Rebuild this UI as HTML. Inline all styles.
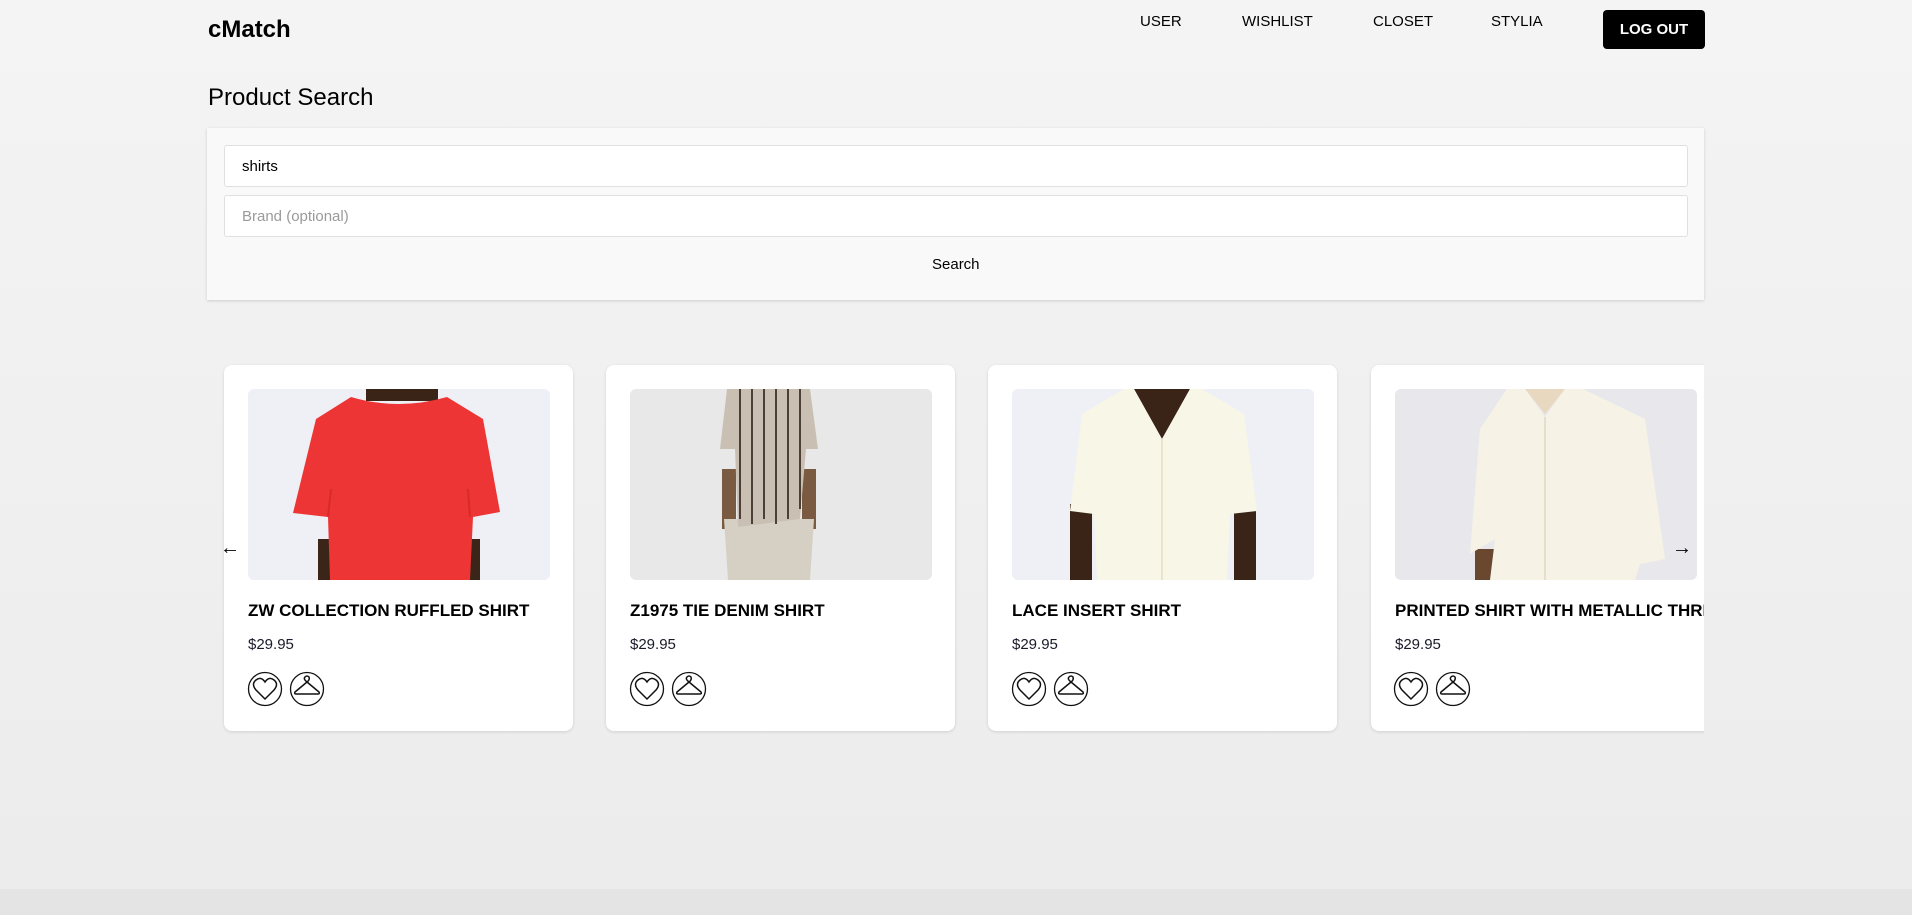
<!DOCTYPE html>
<html><head><meta charset="utf-8"><style>
*{box-sizing:border-box;margin:0;padding:0}
body{width:1912px;height:915px;overflow:hidden;font-family:"Liberation Sans",sans-serif;background:linear-gradient(#f4f4f4,#ececec 880px);position:relative;color:#000}
.abs{position:absolute}
.logo{left:208px;top:16px;font-size:24px;font-weight:bold}
.nav{top:13px;font-size:15px}
.btn{left:1603px;top:10px;width:102px;height:39px;background:#000;color:#fff;border-radius:4px;font-weight:bold;font-size:15px;display:flex;align-items:center;justify-content:center}
.h1{left:208px;top:84px;font-size:24px}
.panel{left:207px;top:128px;width:1497px;height:172px;background:#f9f9f9;box-shadow:0 1px 3px rgba(0,0,0,.15)}
.inp{left:224px;width:1464px;height:42px;background:#fff;border:1px solid #e0e0e0;border-radius:3px;font-size:15px;padding:12px 17px}
.search{left:932px;top:256px;font-size:15px}
.card{top:365px;width:349px;height:366px;background:#fff;border-radius:8px;box-shadow:0 1px 3px rgba(0,0,0,.12);overflow:hidden}
.img{position:absolute;left:24px;top:24px;width:302px;height:191px;border-radius:6px;overflow:hidden}
.card .t{position:absolute;left:24px;top:236px;font-size:17px;font-weight:bold;white-space:nowrap}
.card .p{position:absolute;left:24px;top:271px;font-size:15px;color:#1a1a2a}
.clip{left:207px;top:360px;width:1497px;height:380px;overflow:hidden}
.bottom{left:0;top:889px;width:1912px;height:26px;background:#e4e4e4}
</style></head><body>
<div class="abs logo">cMatch</div>
<div class="abs nav" style="left:1140px">USER</div>
<div class="abs nav" style="left:1242px">WISHLIST</div>
<div class="abs nav" style="left:1373px">CLOSET</div>
<div class="abs nav" style="left:1491px">STYLIA</div>
<div class="abs btn">LOG OUT</div>
<div class="abs h1">Product Search</div>
<div class="abs panel"></div>
<div class="abs inp" style="top:145px">shirts</div>
<div class="abs inp" style="top:195px;color:#9a9a9a">Brand (optional)</div>
<div class="abs search">Search</div>

<div class="abs clip">
<div class="abs card" style="left:17px;top:5px">
 <div class="img"><svg width="302" height="191" viewBox="0 0 302 191"><rect width="302" height="191" fill="#eff0f6"/><path d="M118 0h72v12h-72z" fill="#3a2418"/><path d="M70 150h20v41h-20zM212 150h20v41h-20z" fill="#3b2418"/><path d="M103 8 Q150 22 199 8 L235 30 L252 123 L225 128 L222 191 L82 191 L80 128 L45 124 L68 30 Z" fill="#ee3535"/><path d="M80 128 L83 100 M222 128 L220 100" stroke="#d82a2a" stroke-width="2"/></svg></div>
 <div class="t">ZW COLLECTION RUFFLED SHIRT</div><div class="p">$29.95</div>
</div>
<div class="abs card" style="left:399px;top:5px">
 <div class="img"><svg width="302" height="191" viewBox="0 0 302 191"><rect width="302" height="191" fill="#e8e8e8"/><path d="M92 80h14v60h-14zM172 80h14v60h-14z" fill="#7a5a40"/><path d="M94 130 L184 130 L180 191 L98 191Z" fill="#d6d0c4"/><path d="M97 0 L180 0 L188 60 L176 60 L170 130 L108 138 L105 60 L90 60 Z" fill="#c9c0b3"/><g stroke="#4c4036" stroke-width="2"><path d="M110 0v130M122 0v135M134 0v130M146 0v135M158 0v130M170 0v120"/></g></svg></div>
 <div class="t">Z1975 TIE DENIM SHIRT</div><div class="p">$29.95</div>
</div>
<div class="abs card" style="left:781px;top:5px">
 <div class="img"><svg width="302" height="191" viewBox="0 0 302 191"><rect width="302" height="191" fill="#eef0f6"/><path d="M58 115h22v76h-22zM222 115h22v76h-22z" fill="#3a2418"/><path d="M122 0h56l-28 50z" fill="#3a2418"/><path d="M112 0 L122 0 L150 50 L178 0 L190 0 L232 25 L245 122 L218 125 L215 191 L85 191 L82 125 L58 122 L70 25 Z" fill="#f8f6e6"/><path d="M150 50v141" stroke="#e8e4cc" stroke-width="2"/></svg></div>
 <div class="t">LACE INSERT SHIRT</div><div class="p">$29.95</div>
</div>
<div class="abs card" style="left:1164px;top:5px">
 <div class="img"><svg width="302" height="191" viewBox="0 0 302 191"><rect width="302" height="191" fill="#e8e8ec"/><path d="M80 160h22v31h-22z" fill="#6a4830"/><path d="M130 0h40l-20 25z" fill="#e8d8c0"/><path d="M112 0 L130 0 L150 28 L170 0 L188 0 L250 30 L270 170 L245 175 L240 191 L95 191 L100 150 L75 165 L85 40 Z" fill="#f6f3e6"/><path d="M150 28v163" stroke="#e4dfcc" stroke-width="2"/></svg></div>
 <div class="t">PRINTED SHIRT WITH METALLIC THREAD</div><div class="p">$29.95</div>
</div>
</div>
<svg class="abs" style="left:0;top:0" width="1912" height="915">
<g fill="none" stroke="#111" stroke-width="1.3">
 <g id="i1"><circle cx="265" cy="689" r="16.5"/><path d="M265 699 L256 690 Q251 684 256 680 Q261 676 265 682 Q269 676 274 680 Q279 684 274 690 Z" stroke-width="1.5"/><circle cx="307" cy="689" r="16.5"/><path d="M307 682 Q303 679 305 677 Q307 675 309 677 Q310 680 307 682 L295 692 Q294 694 296 694 L318 694 Q320 694 319 692 Z" stroke-width="1.5"/></g>
 <use href="#i1" x="382"/><use href="#i1" x="764"/><use href="#i1" x="1146"/>
</g>
</svg>
<div class="abs" style="left:220px;top:537px;font-size:20px;font-weight:bold">←</div>
<div class="abs" style="left:1672px;top:537px;font-size:20px;font-weight:bold">→</div>
<div class="abs bottom"></div>
</body></html>
